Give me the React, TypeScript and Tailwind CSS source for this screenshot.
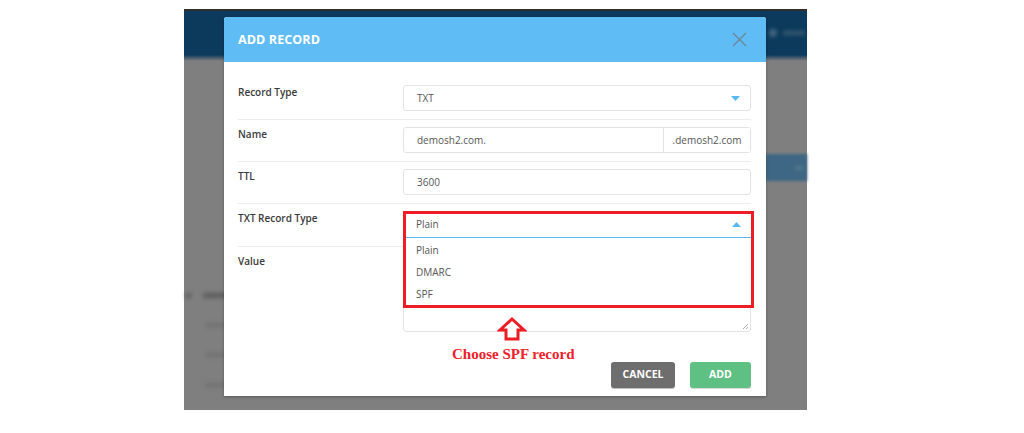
import React from "react";

function Caret({ up = false }: { up?: boolean }) {
  return (
    <svg width="9" height="5" viewBox="0 0 9 5" className="shrink-0">
      {up ? <path d="M0 5 L4.5 0 L9 5 Z" fill="#5ab8f1" /> : <path d="M0 0 L4.5 5 L9 0 Z" fill="#5ab8f1" />}
    </svg>
  );
}

function Row({ label, children, last = false }: { label: string; children: React.ReactNode; last?: boolean }) {
  return (
    <div className={`flex items-start pt-[7px] ${last ? "" : "pb-[8px] border-b border-[#ececec]"}`}>
      <div className="w-[165px] shrink-0 pt-[1px] text-[10px] leading-[13px] font-semibold text-[#3a3a3a]">{label}</div>
      <div className="flex-1 relative">{children}</div>
    </div>
  );
}

const inputCls =
  "h-[26px] flex items-center px-[13px] border border-[#e3e3e3] rounded-[3px] bg-white text-[10px] text-[#555]";

export default function App() {
  return (
    <div className="w-[1024px] h-[433px] bg-white overflow-hidden" style={{ fontFamily: '"Open Sans", sans-serif' }}>
      <div className="ml-[184px] mt-[9px] w-[623px] h-[401px] relative bg-[#7f7f7f] flex flex-col">
        {/* background app */}
        <div className="h-[2px] bg-[#2e2e2e]" />
        <div className="h-[44px] bg-[#0b3a5c] flex items-center justify-end pr-[2px] gap-[6px]">
          <div className="w-[8px] h-[8px] rounded-full bg-[#46677f] blur-[2px]" />
          <div className="w-[22px] h-[4px] bg-[#3c5c74] blur-[2px]" />
        </div>
        <div className="h-[6px] bg-gradient-to-b from-[#0b3a5c] to-[#7f7f7f]" />
        <div className="flex-1 flex flex-col">
          <div className="mt-[93px] h-[27px] ml-[581px] bg-[#3d6784] blur-[1.5px] flex items-center pl-[30px]">
            <div className="w-[8px] h-[4px] bg-[#52778f] blur-[1px]" />
          </div>
          <div className="mt-[112px] ml-[2px] flex items-center gap-[12px] blur-[2px]">
            <div className="w-[5px] h-[5px] bg-[#5c5c5c]" />
            <div className="w-[30px] h-[5px] bg-[#5c5c5c]" />
          </div>
          <div className="mt-[25px] ml-[22px] w-[20px] h-[4px] bg-[#707070] blur-[2px]" />
          <div className="mt-[26px] ml-[22px] w-[20px] h-[4px] bg-[#707070] blur-[2px]" />
          <div className="mt-[26px] ml-[22px] w-[20px] h-[4px] bg-[#707070] blur-[2px]" />
        </div>

        {/* modal */}
        <div className="absolute left-[40px] top-[8px] w-[542px] h-[379px] bg-white flex flex-col rounded-t-[3px] shadow-[0_1px_3px_rgba(0,0,0,0.3)]">
          <div className="h-[45px] bg-[#5fbcf5] rounded-t-[3px] flex items-center justify-between pl-[14px] pr-[19px]">
            <span className="text-white font-bold text-[12.5px] tracking-[0.1px] pt-[1px]">ADD RECORD</span>
            <svg width="15" height="15" viewBox="0 0 15 15">
              <path d="M1 1 L14 14 M14 1 L1 14" stroke="#6d8598" strokeWidth="1.3" fill="none" />
            </svg>
          </div>
          <div className="pt-[16px] pl-[14px] pr-[15px] flex flex-col">
            <Row label="Record Type">
              <div className={`${inputCls} justify-between pr-[10px]`}>
                <span>TXT</span>
                <Caret />
              </div>
            </Row>
            <Row label="Name">
              <div className="h-[26px] flex border border-[#e3e3e3] rounded-[3px] text-[10px] text-[#555]">
                <div className="flex-1 flex items-center px-[13px]">demosh2.com.</div>
                <div className="w-[87px] flex items-center justify-center border-l border-[#e3e3e3] bg-white">.demosh2.com</div>
              </div>
            </Row>
            <Row label="TTL">
              <div className={inputCls}>3600</div>
            </Row>
            <Row label="TXT Record Type">
              <div className="h-[27px] flex items-center justify-between px-[13px] pr-[10px] border-b border-[#5ab8f1] text-[10px] text-[#555]">
                <span>Plain</span>
                <Caret up />
              </div>
              <div className="absolute left-0 right-0 top-[28px] z-10 bg-white text-[10px] text-[#555]">
                {["Plain", "DMARC", "SPF"].map((o) => (
                  <div key={o} className="h-[22px] flex items-center px-[13px]">
                    {o}
                  </div>
                ))}
              </div>
              <div className="absolute left-0 -right-[3px] top-0 h-[97px] border-[3px] border-[#ee1c25] z-20 pointer-events-none" />
            </Row>
            <Row label="Value" last>
              <div className="h-[78px] border border-[#e3e3e3] rounded-[3px] relative">
                <svg width="7" height="7" viewBox="0 0 7 7" className="absolute right-[1px] bottom-[1px]">
                  <path d="M6 1 L1 6 M6 4 L4 6" stroke="#999" strokeWidth="0.8" />
                </svg>
              </div>
              <div className="absolute left-[94px] top-[63px] z-20">
                <svg width="30" height="24" viewBox="0 0 30 24">
                  <path d="M15 2 L27 13 L21 13 L21 22 L9 22 L9 13 L3 13 Z" fill="white" stroke="#ee1c25" strokeWidth="3" strokeLinejoin="miter" />
                </svg>
              </div>
              <div
                className="absolute left-[49px] top-[89px] z-20 text-[15px] font-bold text-[#f0202a] whitespace-nowrap"
                style={{ fontFamily: '"Liberation Serif", serif' }}
              >
                Choose SPF record
              </div>
            </Row>
            <div className="pt-[30px] flex justify-end gap-[15px]">
              <button className="w-[64px] h-[26px] rounded-[3px] bg-[#6e6e6e] text-white text-[10.5px] font-bold shadow-[0_1px_0_rgba(0,0,0,0.25)]">
                CANCEL
              </button>
              <button className="w-[61px] h-[26px] rounded-[3px] bg-[#5ec083] text-white text-[10.5px] font-bold shadow-[0_1px_0_rgba(0,0,0,0.15)]">
                ADD
              </button>
            </div>
          </div>
        </div>
      </div>
    </div>
  );
}
